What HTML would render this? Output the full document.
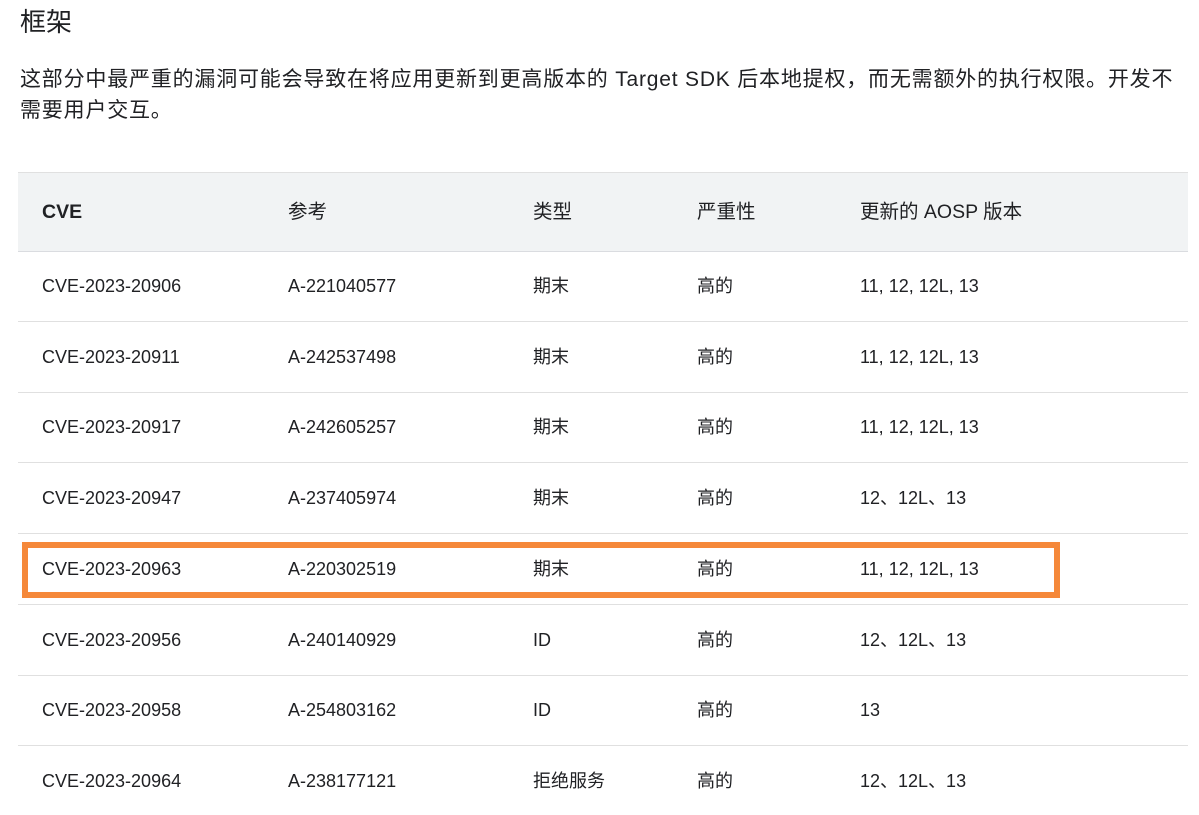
<!DOCTYPE html>
<html><head><meta charset="utf-8"><style>
body{margin:0;width:1199px;height:815px;overflow:hidden;background:#fff;font-family:"Liberation Sans","Noto Sans CJK SC",sans-serif;color:#202124;position:relative}
h1{position:absolute;left:20px;top:2px;margin:0;font-weight:400;font-size:26px;line-height:40px;color:#202124}
p{position:absolute;left:20px;top:64px;margin:0;font-size:21px;line-height:31px;width:1175px;white-space:nowrap;letter-spacing:0.8px}
.hd{position:absolute;left:18px;top:172px;width:1170px;height:78px;background:#f1f3f4;border-top:1px solid #e0e0e0;border-bottom:1px solid #dadce0}
.ln{position:absolute;left:18px;width:1170px;height:1px;background:#e0e0e0}
.t{position:absolute;font-size:18px;line-height:24px;white-space:nowrap;color:#202124}
.h{font-size:19.5px}
.box{position:absolute;left:22px;top:542px;width:1026px;height:44px;border:6px solid #f5883a}
</style></head><body>
<h1>框架</h1>
<p>这部分中最严重的漏洞可能会导致在将应用更新到更高版本的 Target SDK 后本地提权，而无需额外的执行权限。开发不<br>需要用户交互。</p>
<div class="hd"></div>
<div class="t h" style="left:42px;top:200px;font-weight:700">CVE</div>
<div class="t h" style="left:288px;top:200px">参考</div>
<div class="t h" style="left:533px;top:200px">类型</div>
<div class="t h" style="left:697px;top:200px">严重性</div>
<div class="t h" style="left:860px;top:200px">更新的 AOSP 版本</div>
<div class="ln" style="top:321px"></div>
<div class="ln" style="top:392px"></div>
<div class="ln" style="top:462px"></div>
<div class="ln" style="top:533px"></div>
<div class="ln" style="top:604px"></div>
<div class="ln" style="top:675px"></div>
<div class="ln" style="top:745px"></div>
<div class="box"></div>
<div class="t" style="left:42px;top:274px">CVE-2023-20906</div><div class="t" style="left:288px;top:274px">A-221040577</div><div class="t" style="left:533px;top:274px">期末</div><div class="t" style="left:697px;top:274px">高的</div><div class="t" style="left:860px;top:274px">11, 12, 12L, 13</div>
<div class="t" style="left:42px;top:345px">CVE-2023-20911</div><div class="t" style="left:288px;top:345px">A-242537498</div><div class="t" style="left:533px;top:345px">期末</div><div class="t" style="left:697px;top:345px">高的</div><div class="t" style="left:860px;top:345px">11, 12, 12L, 13</div>
<div class="t" style="left:42px;top:415px">CVE-2023-20917</div><div class="t" style="left:288px;top:415px">A-242605257</div><div class="t" style="left:533px;top:415px">期末</div><div class="t" style="left:697px;top:415px">高的</div><div class="t" style="left:860px;top:415px">11, 12, 12L, 13</div>
<div class="t" style="left:42px;top:486px">CVE-2023-20947</div><div class="t" style="left:288px;top:486px">A-237405974</div><div class="t" style="left:533px;top:486px">期末</div><div class="t" style="left:697px;top:486px">高的</div><div class="t" style="left:860px;top:486px">12、12L、13</div>
<div class="t" style="left:42px;top:557px">CVE-2023-20963</div><div class="t" style="left:288px;top:557px">A-220302519</div><div class="t" style="left:533px;top:557px">期末</div><div class="t" style="left:697px;top:557px">高的</div><div class="t" style="left:860px;top:557px">11, 12, 12L, 13</div>
<div class="t" style="left:42px;top:628px">CVE-2023-20956</div><div class="t" style="left:288px;top:628px">A-240140929</div><div class="t" style="left:533px;top:628px">ID</div><div class="t" style="left:697px;top:628px">高的</div><div class="t" style="left:860px;top:628px">12、12L、13</div>
<div class="t" style="left:42px;top:698px">CVE-2023-20958</div><div class="t" style="left:288px;top:698px">A-254803162</div><div class="t" style="left:533px;top:698px">ID</div><div class="t" style="left:697px;top:698px">高的</div><div class="t" style="left:860px;top:698px">13</div>
<div class="t" style="left:42px;top:769px">CVE-2023-20964</div><div class="t" style="left:288px;top:769px">A-238177121</div><div class="t" style="left:533px;top:769px">拒绝服务</div><div class="t" style="left:697px;top:769px">高的</div><div class="t" style="left:860px;top:769px">12、12L、13</div>
</body></html>
